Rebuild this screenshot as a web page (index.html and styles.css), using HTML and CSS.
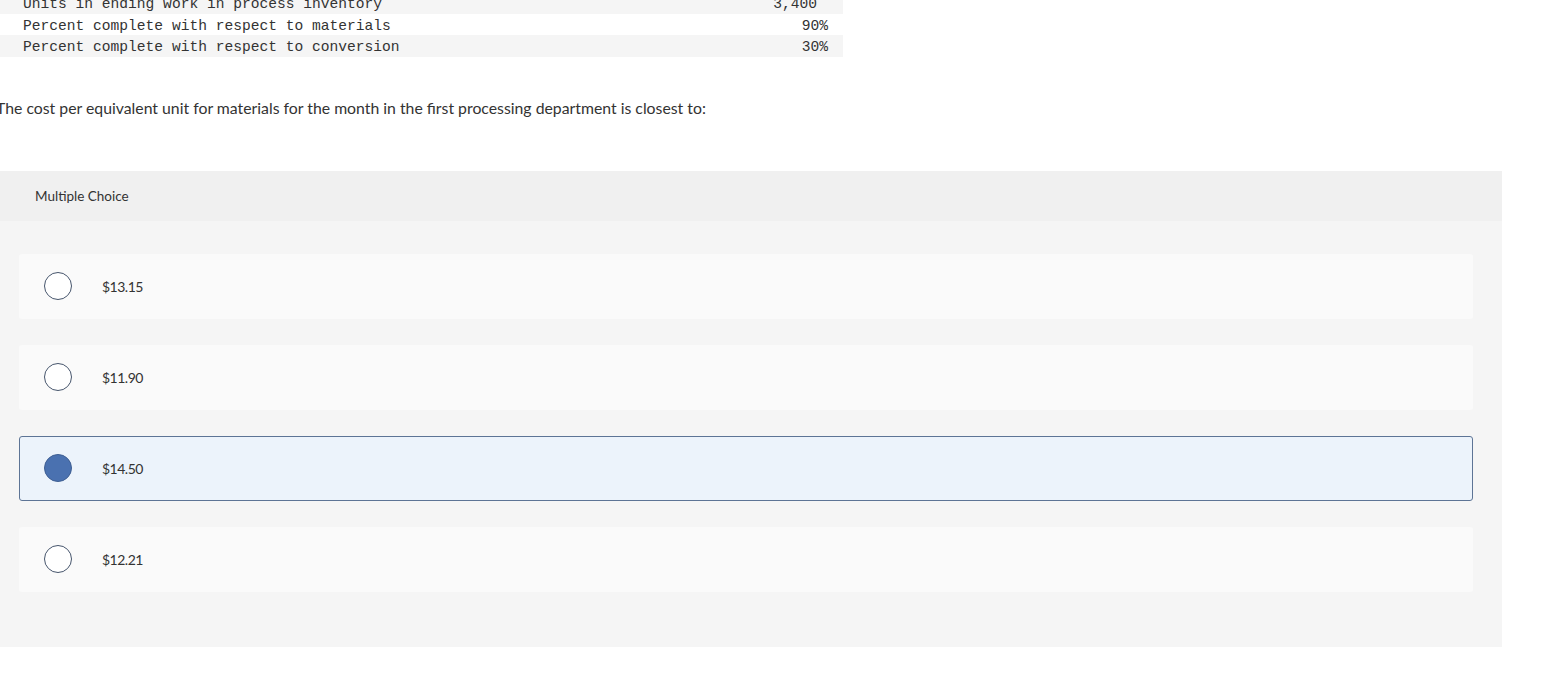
FILE: index.html
```html
<!DOCTYPE html>
<html lang="en">
<head>
    <meta charset="UTF-8">
    <meta name="viewport" content="width=device-width, initial-scale=1.0">
    <title>Multiple Choice Question</title>
    <link rel="stylesheet" href="styles.css">
</head>
<body>
    <!-- Data table -->
    <table class="data">
        <tr class="shade">
            <td>Units in ending work in process inventory</td>
            <td class="num wide">3,400</td>
        </tr>
        <tr>
            <td>Percent complete with respect to materials</td>
            <td class="num">90%</td>
        </tr>
        <tr class="shade">
            <td>Percent complete with respect to conversion</td>
            <td class="num">30%</td>
        </tr>
    </table>

    <p class="question">The cost per equivalent unit for materials for the month in the first processing department is closest to:</p>

    <!-- Answer panel -->
    <div class="panel">
        <div class="panel-header">Multiple Choice</div>
        <div class="panel-body">
            <label class="option">
                <span class="radio"></span>
                <span class="label">$13.15</span>
            </label>
            <label class="option">
                <span class="radio"></span>
                <span class="label">$11.90</span>
            </label>
            <label class="option selected">
                <span class="radio"></span>
                <span class="label">$14.50</span>
            </label>
            <label class="option">
                <span class="radio"></span>
                <span class="label">$12.21</span>
            </label>
        </div>
    </div>
</body>
</html>
```

FILE: styles.css
```css
body {
    margin: 0;
    padding: 0;
    background-color: #fff;
    font-family: Lato, "Open Sans", sans-serif;
    color: #333;
    overflow: hidden;
}
.data {
    width: 843px;
    margin-top: -8px;
    border-collapse: collapse;
    font-family: "Liberation Mono", monospace;
    font-size: 14.6px;
    color: #333;
}
.data td {
    padding: 3px 0 0 23px;
    line-height: 18.5px;
    white-space: pre;
}
.data tr.shade {
    background-color: #f5f5f5;
}
.data td.num {
    text-align: right;
    padding-right: 15px;
}
.data td.num.wide {
    padding-right: 26px;
}
.question {
    margin: 41px 0 0 -4px;
    font-size: 15.8px;
    line-height: 20px;
    color: #333;
}
.panel {
    width: 1502px;
    margin-top: 53px;
    background-color: #f5f5f5;
}
.panel-header {
    height: 50px;
    padding-left: 35px;
    display: flex;
    align-items: center;
    background-color: #f0f0f0;
    font-size: 13.5px;
    color: #333;
}
.panel-body {
    padding: 33px 29px 55px 19px;
    display: flex;
    flex-direction: column;
    gap: 26px;
}
.option {
    height: 65px;
    box-sizing: border-box;
    display: flex;
    align-items: center;
    background-color: #fafafa;
    border: 1px solid transparent;
    border-radius: 3px;
    cursor: pointer;
}
.option.selected {
    background-color: #ecf3fb;
    border-color: #5d7495;
}
.radio {
    width: 28px;
    height: 28px;
    box-sizing: border-box;
    margin-left: 24px;
    border: 1.5px solid #46556c;
    border-radius: 50%;
    background-color: #fff;
}
.option.selected .radio {
    background-color: #4a71b0;
    border-color: #3f5f93;
}
.label {
    margin-left: 30px;
    font-size: 14px;
    letter-spacing: -0.5px;
    color: #333;
}
```
